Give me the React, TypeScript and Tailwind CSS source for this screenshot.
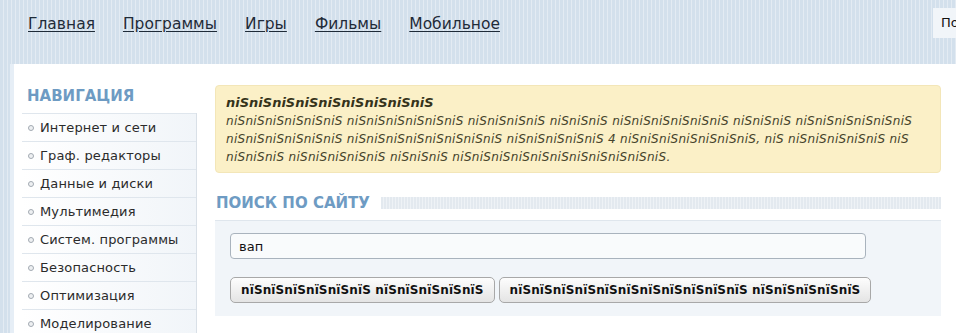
import React from "react";

const navLinks = ["Главная", "Программы", "Игры", "Фильмы", "Мобильное"];

const sideItems = [
  "Интернет и сети",
  "Граф. редакторы",
  "Данные и диски",
  "Мультимедия",
  "Систем. программы",
  "Безопасность",
  "Оптимизация",
  "Моделирование",
  "Офис",
];

function SideItem({ label }: { label: string }) {
  return (
    <li className="flex h-7 items-center border-t border-[#dfe6ed] bg-gradient-to-r from-white to-[#f1f5f9] pl-1.5">
      <span className="mr-[6px] h-[6px] w-[6px] rounded-full border border-[#a3aab2] bg-[#eef0f2]" />
      <span className="text-[13px] leading-none tracking-[0.15px] text-[#2b2b2b]">{label}</span>
    </li>
  );
}

export default function App() {
  return (
    <div className="h-[333px] w-[956px] overflow-hidden bg-[repeating-linear-gradient(90deg,#d3e0ec_0px,#d3e0ec_3px,#e3ebf3_3px,#e3ebf3_4px)] font-['DejaVu_Sans',Verdana,sans-serif]">
      {/* верхнее меню */}
      <header className="flex h-16 items-start pl-7">
        <nav className="flex gap-7 pt-[14px]">
          {navLinks.map((l) => (
            <a
              key={l}
              href="#"
              className="text-[15.5px] leading-5 text-[#1f2b38] underline underline-offset-2"
            >
              {l}
            </a>
          ))}
        </nav>
        <div className="ml-auto mt-2 flex h-[30px] w-[23px] items-center bg-[#f1f5f9] pl-2 text-[13px] text-[#111]">
          <span className="whitespace-nowrap">По</span>
        </div>
      </header>

      {/* основная панель */}
      <div className="ml-2.5 flex border-l-4 border-[#e6eef6] bg-white">
        <aside className="w-[183px] shrink-0 pl-2">
          <h2 className="pl-[5px] pt-[22px] text-[15px] font-bold leading-5 text-[#6e9bc3]">
            НАВИГАЦИЯ
          </h2>
          <ul className="mt-[7px] border-r border-[#d9e0e7]">
            {sideItems.map((s) => (
              <SideItem key={s} label={s} />
            ))}
          </ul>
        </aside>

        <main className="flex-1 pl-[18px] pr-[15px] pt-[21px]">
          <div className="h-[88px] rounded-[4px] border border-[#f3e6b8] bg-[#fbf0c7] pl-2.5 pt-[8px] italic leading-[18px]">
            <p className="text-[13px] font-bold text-[#35331a]">niSniSniSniSniSniSniSniSniS</p>
            <p className="text-[12px] tracking-[0.3px] text-[#45432b]">
              niSniSniSniSniSniS niSniSniSniSniSniS niSniSniSniS niSniSniS niSniSniSniSniSniS niSniSniS niSniSniSniSniSniS
              <br />
              niSniSniSniSniSniS niSniSniSniSniSniSniSniS niSniSniSniSniS 4 niSniSniSniSniSniSniS, niS niSniSniSniSniS niS
              <br />
              niSniSniS niSniSniSniSniS niSniSniS niSniSniSniSniSniSniSniSniSniSniS.
            </p>
          </div>

          <div className="mt-5 flex h-5 items-center">
            <h2 className="whitespace-nowrap pl-px text-[15px] font-bold leading-5 text-[#6e9bc3]">
              ПОИСК ПО САЙТУ
            </h2>
            <div className="ml-[11px] h-3 flex-1 bg-[repeating-linear-gradient(90deg,#e3e9ef_0px,#e3e9ef_2px,#eef2f6_2px,#eef2f6_3px)]" />
          </div>

          <div className="mt-[7px] border-t border-[#dfe6ed] bg-[#f1f5f9] pb-[13px] pl-[15px] pt-3">
            <input
              defaultValue="вап"
              className="block h-[26px] w-[636px] rounded-[4px] border border-[#a9b3bd] bg-[#f9fbfc] pl-2 font-['DejaVu_Sans',sans-serif] text-[13px] text-[#111] outline-none"
            />
            <div className="mt-[18px] flex gap-1">
              <button className="h-[26px] rounded-[5px] border border-[#a8a8a8] bg-gradient-to-b from-[#fdfdfd] to-[#e4e4e4] px-2.5 text-[12px] font-bold tracking-[0.12px] text-[#111]">
                nïSnïSnïSnïSnïSnïS nïSnïSnïSnïSnïS
              </button>
              <button className="h-[26px] rounded-[5px] border border-[#a8a8a8] bg-gradient-to-b from-[#fdfdfd] to-[#e4e4e4] px-2.5 text-[12px] font-bold tracking-[0.12px] text-[#111]">
                nïSnïSnïSnïSnïSnïSnïSnïSnïSnïSnïS nïSnïSnïSnïSnïS
              </button>
            </div>
          </div>
        </main>
      </div>
    </div>
  );
}
